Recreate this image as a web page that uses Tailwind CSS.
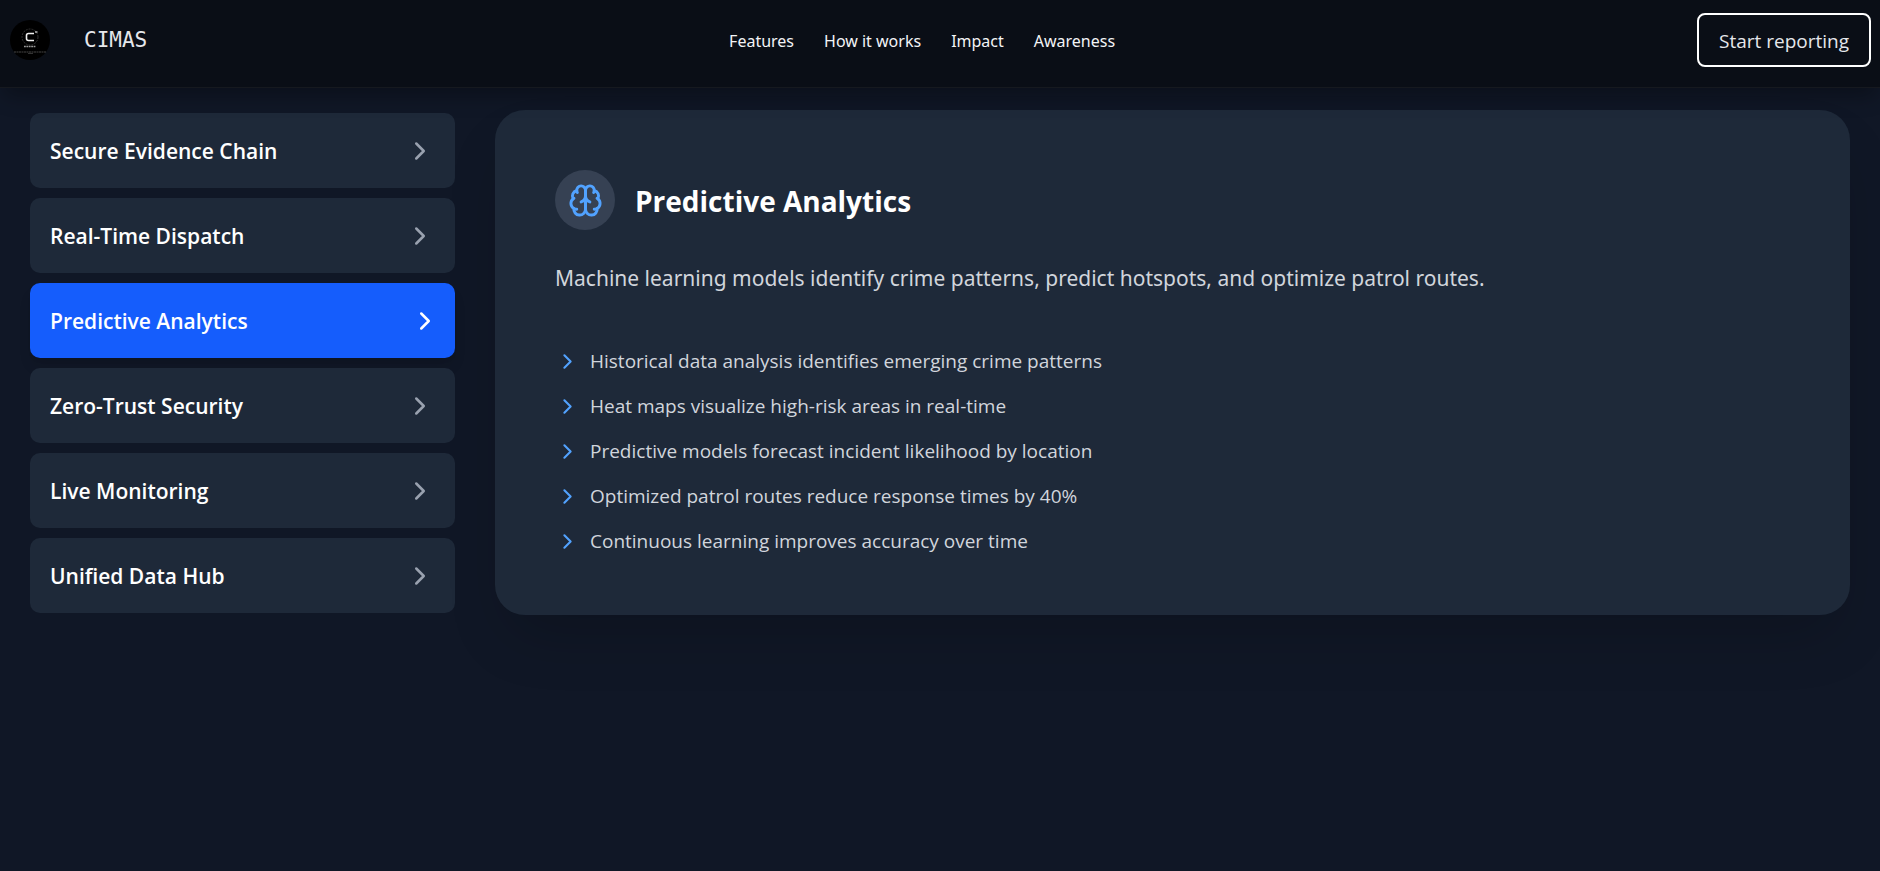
<!DOCTYPE html>
<html lang="en">
<head>
<meta charset="utf-8">
<meta name="viewport" content="width=device-width, initial-scale=1">
<title>CIMAS</title>
<script src="https://cdn.jsdelivr.net/npm/@tailwindcss/browser@4"></script>
</head>
<body class="min-h-screen bg-[#101726] font-['Open_Sans',sans-serif] text-white">
<svg class="hidden" aria-hidden="true">
  <symbol id="chevron" viewBox="0 0 24 24" fill="none" stroke="currentColor" stroke-width="2" stroke-linecap="round" stroke-linejoin="round"><path d="m9 18 6-6-6-6"/></symbol>
</svg>
<header class="relative z-10 flex items-center justify-between border-b border-[#16191f] bg-[#0a0e16] pr-[9px] pl-[10px] pt-[13px] pb-5 shadow-[0_12px_19px_-4px_rgba(0,0,0,0.3)]">
  <a href="#" class="flex items-center gap-[34px]">
    <svg class="size-10" viewBox="0 0 40 40" role="img" aria-label="CIMAS logo">
      <circle cx="20" cy="20" r="20" fill="#000"/>
      <circle cx="20" cy="17" r="8" fill="none" stroke="#333" stroke-width="1" stroke-dasharray="2 1"/>
      <path d="M24 13.500h-5.500q-2 0-2 2v3q0 2 2 2h5.500" fill="none" stroke="#eee" stroke-width="1.600"/>
      <path d="M25 12h2.500" stroke="#ccc" stroke-width="1.300"/>
      <path d="M14 26.500h12" stroke="#999" stroke-width="1.500" stroke-dasharray="1.800 .6"/>
      <path d="M4 32h32" stroke="#444" stroke-width="1" stroke-dasharray="2 .5"/>
      <path d="M18 33.500h5" stroke="#333" stroke-width="1"/>
    </svg>
    <span class="font-['DejaVu_Sans_Mono',monospace] text-[21px] leading-7 text-gray-200">CIMAS</span>
  </a>
  <nav class="flex items-center gap-[30px] pt-[2px] font-['Noto_Sans',sans-serif] text-[16px] leading-6 text-gray-100">
    <a href="#features">Features</a>
    <a href="#how">How it works</a>
    <a href="#impact">Impact</a>
    <a href="#awareness">Awareness</a>
  </nav>
  <button type="button" class="rounded-lg border-2 border-white px-5 pt-[11px] pb-[9px] text-[19px] leading-[30px] text-gray-200">Start reporting</button>
</header>
<main class="grid grid-cols-4 items-start gap-10 px-[30px] pt-[22px]">
  <div class="mt-[3px] flex flex-col gap-[10px] text-[21px] leading-[36px] font-semibold">
    <button type="button" class="flex items-center justify-between rounded-[10px] bg-gray-800 px-5 pt-5 pb-[19px] text-left">Secure Evidence Chain<svg class="size-[30px] text-gray-400"><use href="#chevron"/></svg></button>
    <button type="button" class="flex items-center justify-between rounded-[10px] bg-gray-800 px-5 pt-5 pb-[19px] text-left">Real-Time Dispatch<svg class="size-[30px] text-gray-400"><use href="#chevron"/></svg></button>
    <button type="button" aria-current="true" class="flex items-center justify-between rounded-[10px] bg-blue-600 pt-5 pr-[15px] pb-[19px] pl-5 text-left shadow-lg">Predictive Analytics<svg class="size-[30px] text-white"><use href="#chevron"/></svg></button>
    <button type="button" class="flex items-center justify-between rounded-[10px] bg-gray-800 px-5 pt-5 pb-[19px] text-left">Zero-Trust Security<svg class="size-[30px] text-gray-400"><use href="#chevron"/></svg></button>
    <button type="button" class="flex items-center justify-between rounded-[10px] bg-gray-800 px-5 pt-5 pb-[19px] text-left">Live Monitoring<svg class="size-[30px] text-gray-400"><use href="#chevron"/></svg></button>
    <button type="button" class="flex items-center justify-between rounded-[10px] bg-gray-800 px-5 pt-5 pb-[19px] text-left">Unified Data Hub<svg class="size-[30px] text-gray-400"><use href="#chevron"/></svg></button>
  </div>
  <section class="col-span-3 rounded-[30px] bg-gray-800 px-[60px] pt-[60px] pb-[59px] shadow-[0_31px_62px_-15px_rgba(0,0,0,0.2)]">
    <div class="flex items-center gap-5">
      <div class="flex size-[60px] items-center justify-center rounded-full bg-gray-700">
        <svg class="size-[35px] text-blue-400" viewBox="0 0 24 24" fill="none" stroke="currentColor" stroke-width="2" stroke-linecap="round" stroke-linejoin="round"><path d="M12 5a3 3 0 1 0-5.997.125 4 4 0 0 0-2.526 5.770 4 4 0 0 0 .556 6.588A4 4 0 1 0 12 18Z"/><path d="M12 5a3 3 0 1 1 5.997.125 4 4 0 0 1 2.526 5.770 4 4 0 0 1-.556 6.588A4 4 0 1 1 12 18Z"/><path d="M15 13a4.500 4.500 0 0 1-3-4 4.500 4.500 0 0 1-3 4"/><path d="M17.599 6.500a3 3 0 0 0 .399-1.375"/><path d="M6.003 5.125A3 3 0 0 0 6.401 6.500"/><path d="M3.477 10.896a4 4 0 0 1 .585-.396"/><path d="M19.938 10.500a4 4 0 0 1 .585.396"/><path d="M6 18a4 4 0 0 1-1.967-.516"/><path d="M19.967 17.484A4 4 0 0 1 18 18"/></svg>
      </div>
      <h2 class="pt-[2px] text-[28px] leading-10 font-bold">Predictive Analytics</h2>
    </div>
    <p class="mt-[30px] font-['Noto_Sans',sans-serif] text-[21px] leading-9 text-gray-300">Machine learning models identify crime patterns, predict hotspots, and optimize patrol routes.</p>
    <ul class="mt-[50px] flex flex-col gap-[15px] text-[19px] leading-[30px] text-gray-300">
      <li class="flex items-center gap-[10px]"><svg class="size-[25px] text-blue-400"><use href="#chevron"/></svg>Historical data analysis identifies emerging crime patterns</li>
      <li class="flex items-center gap-[10px]"><svg class="size-[25px] text-blue-400"><use href="#chevron"/></svg>Heat maps visualize high-risk areas in real-time</li>
      <li class="flex items-center gap-[10px]"><svg class="size-[25px] text-blue-400"><use href="#chevron"/></svg>Predictive models forecast incident likelihood by location</li>
      <li class="flex items-center gap-[10px]"><svg class="size-[25px] text-blue-400"><use href="#chevron"/></svg>Optimized patrol routes reduce response times by 40%</li>
      <li class="flex items-center gap-[10px]"><svg class="size-[25px] text-blue-400"><use href="#chevron"/></svg>Continuous learning improves accuracy over time</li>
    </ul>
  </section>
</main>
</body>
</html>
